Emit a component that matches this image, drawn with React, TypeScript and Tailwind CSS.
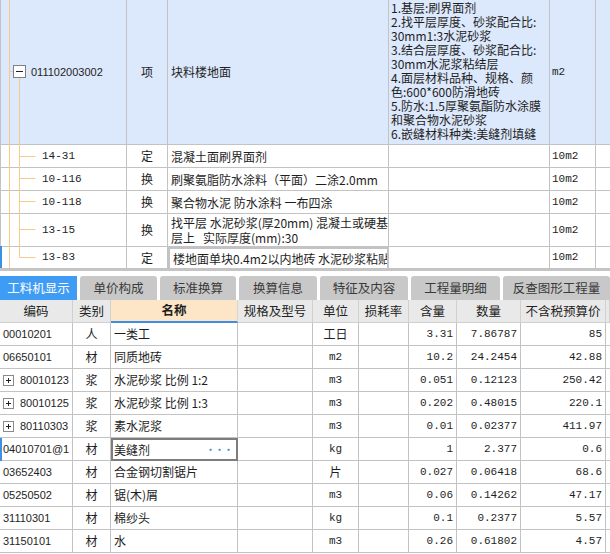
import React from "react";

const line = "border-[#c3c3c3]";

const subRows = [
  { code: "14-31", type: "定", name: ["混凝土面刷界面剂"], unit: "10m2", h: "h-[23px]" },
  { code: "10-116", type: "换", name: ["刷聚氨脂防水涂料（平面）二涂2.0mm"], unit: "10m2", h: "h-[23px]" },
  { code: "10-118", type: "换", name: ["聚合物水泥 防水涂料 一布四涂"], unit: "10m2", h: "h-[23px]" },
  { code: "13-15", type: "换", name: ["找平层 水泥砂浆(厚20mm) 混凝土或硬基", "层上   实际厚度(mm):30"], unit: "10m2", h: "h-[33px]" },
  { code: "13-83", type: "定", name: ["楼地面单块0.4m2以内地砖 水泥砂浆粘贴"], unit: "10m2", h: "h-[22px]", sel: true },
];

const features = [
  "1.基层:刷界面剂",
  "2.找平层厚度、砂浆配合比:",
  "30mm1:3水泥砂浆",
  "3.结合层厚度、砂浆配合比:",
  "30mm水泥浆粘结层",
  "4.面层材料品种、规格、颜",
  "色:600*600防滑地砖",
  "5.防水:1.5厚聚氨酯防水涂膜",
  "和聚合物水泥砂浆",
  "6.嵌缝材料种类:美缝剂填缝",
];

const tabs = [
  { label: "工料机显示", w: "w-[77px]", active: true },
  { label: "单价构成", w: "w-[77px]" },
  { label: "标准换算", w: "w-[76px]" },
  { label: "换算信息", w: "w-[78px]" },
  { label: "特征及内容", w: "w-[88px]" },
  { label: "工程量明细", w: "w-[89px]" },
  { label: "反查图形工程量", w: "w-[107px]" },
];

const heads = ["编码", "类别", "名称", "规格及型号", "单位", "损耗率", "含量", "数量", "不含税预算价", ""];

const items = [
  { code: "00010201", type: "人", name: "一类工", unit: "工日", qty: "3.31", amount: "7.86787", price: "85" },
  { code: "06650101", type: "材", name: "同质地砖", unit: "m2", qty: "10.2", amount: "24.2454", price: "42.88" },
  { code: "80010123", type: "浆", name: "水泥砂浆 比例 1:2", unit: "m3", qty: "0.051", amount: "0.12123", price: "250.42", plus: true },
  { code: "80010125", type: "浆", name: "水泥砂浆 比例 1:3", unit: "m3", qty: "0.202", amount: "0.48015", price: "220.1", plus: true },
  { code: "80110303", type: "浆", name: "素水泥浆", unit: "m3", qty: "0.01", amount: "0.02377", price: "411.97", plus: true },
  { code: "04010701@1", type: "材", name: "美缝剂", unit: "kg", qty: "1", amount: "2.377", price: "0.6", sel: true },
  { code: "03652403", type: "材", name: "合金钢切割锯片", unit: "片", qty: "0.027", amount: "0.06418", price: "68.6" },
  { code: "05250502", type: "材", name: "锯(木)屑", unit: "m3", qty: "0.06", amount: "0.14262", price: "47.17" },
  { code: "31110301", type: "材", name: "棉纱头", unit: "kg", qty: "0.1", amount: "0.2377", price: "5.57" },
  { code: "31150101", type: "材", name: "水", unit: "m3", qty: "0.26", amount: "0.61802", price: "4.57" },
];

const mono = "font-['Liberation_Mono',monospace] text-[11px]";
const sans = "font-['Liberation_Sans',sans-serif] text-[11px]";

function PlusBox() {
  return (
    <svg width="11" height="11" viewBox="0 0 11 11" className="shrink-0">
      <rect x="0.5" y="0.5" width="10" height="10" fill="#fff" stroke="#8a8a8a" />
      <path d="M3 5.5h5M5.5 3v5" stroke="#222" />
    </svg>
  );
}

function TopSection() {
  return (
    <div className="relative">
      <div className="grid grid-cols-[127px_41px_221px_161px_46px_14px]">
        {/* 清单行 */}
        <div className={`h-[145px] bg-[#dce8fb] border-l border-r border-b ${line} flex items-center pl-[30px] ${sans}`}>011102003002</div>
        <div className={`h-[145px] bg-[#dce8fb] border-r border-b ${line} flex items-center justify-center`}>项</div>
        <div className={`h-[145px] bg-[#dce8fb] border-r border-b ${line} flex items-center pl-[3px]`}>块料楼地面</div>
        <div className={`h-[145px] bg-[#dce8fb] border-r border-b ${line} pl-[2px] pt-[1px] whitespace-nowrap overflow-hidden`}>
          {features.map((f, i) => (
            <div key={i} className="leading-[14px]">{f}</div>
          ))}
        </div>
        <div className={`h-[145px] bg-[#dce8fb] border-r border-b ${line} flex items-center pl-[2px] ${mono}`}>m2</div>
        <div className={`h-[145px] bg-[#dce8fb] border-b ${line}`} />

        {subRows.map((r) => (
          <React.Fragment key={r.code}>
            <div className={`${r.h} border-l border-r border-b ${line} flex items-center pl-[41px] ${mono}`}>{r.code}</div>
            <div className={`${r.h} border-r border-b ${line} flex items-center justify-center`}>{r.type}</div>
            <div
              className={`${r.h} border-b ${line} flex flex-col justify-center pl-[3px] whitespace-pre overflow-hidden ${
                r.sel ? "border-2 border-[#3d8fe6] pl-[1px]" : "border-r"
              }`}
            >
              {r.name.map((n, i) => (
                <div key={i} className="leading-[15px]">{n}</div>
              ))}
            </div>
            <div className={`${r.h} border-r border-b ${line}`} />
            <div className={`${r.h} border-r border-b ${line} flex items-center pl-[2px] ${mono}`}>{r.unit}</div>
            <div className={`${r.h} border-b ${line}`} />
          </React.Fragment>
        ))}
      </div>

      {/* 树形连线 */}
      <svg className="absolute left-0 top-0 pointer-events-none" width="40" height="269">
        <path d="M9.5 0v268M9.5 71.5h4M19.5 78v179.5" stroke="#f7c98c" fill="none" />
        {[156.5, 178.5, 201.5, 229.5, 257.5].map((y) => (
          <path key={y} d={`M19.5 ${y}h16`} stroke="#f7c98c" />
        ))}
        <rect x="13.5" y="65.5" width="12" height="12" fill="#fff" stroke="#808080" />
        <path d="M16 71.5h7" stroke="#222" />
        <rect x="0" y="246" width="2" height="22" fill="#3d8fe6" />
      </svg>
    </div>
  );
}

function Tabs() {
  return (
    <div className="flex gap-[3px] h-[24px] mt-[5px]">
      {tabs.map((t) => (
        <div
          key={t.label}
          className={`${t.w} flex items-center justify-center text-[12.5px] ${
            t.active ? "bg-[#3f9cf5] text-white" : "bg-[#c8c8c8] text-[#3a3a3a] rounded-t-[3px]"
          }`}
        >
          {t.label}
        </div>
      ))}
    </div>
  );
}

const cols = "grid grid-cols-[73px_38px_127px_75px_46px_50px_48px_64px_85px_4px]";

function ItemTable() {
  return (
    <div>
      <div className={cols}>
        {heads.map((h, i) =>
          i === 2 ? (
            <div key={i} className="h-[23px] bg-[#fde6c8] border-r border-[#d6d6d6] border-b-2 border-b-[#3d8fe6] flex items-center justify-center font-bold text-[12.5px]">
              {h}
            </div>
          ) : (
            <div key={i} className="h-[23px] bg-[#e9e9e9] border-r border-b border-[#d0d0d0] flex items-center justify-center text-[12.5px] text-[#222]">
              {h}
            </div>
          )
        )}
      </div>
      {items.map((r) => (
        <div key={r.code} className={`${cols} relative`}>
          <div className={`h-[23px] border-r border-b ${line} flex items-center gap-[6px] pl-[3px] ${sans}`}>
            {r.plus && <PlusBox />}
            {r.code}
          </div>
          <div className={`h-[23px] border-r border-b ${line} flex items-center justify-center`}>{r.type}</div>
          {r.sel ? (
            <div className="h-[23px] border-2 border-[#7d7d7d] flex items-center justify-between pl-[1px] pr-[3px]">
              <span>{r.name}</span>
              <span className="text-[#4a8fd6] font-bold text-[9px] leading-none">···</span>
            </div>
          ) : (
            <div className={`h-[23px] border-r border-b ${line} flex items-center pl-[3px] whitespace-nowrap`}>{r.name}</div>
          )}
          <div className={`h-[23px] border-r border-b ${line}`} />
          <div className={`h-[23px] border-r border-b ${line} flex items-center justify-center ${/^[\x00-\x7f]+$/.test(r.unit) ? mono : ""}`}>
            {r.unit}
          </div>
          <div className={`h-[23px] border-r border-b ${line}`} />
          <div className={`h-[23px] border-r border-b ${line} flex items-center justify-end pr-[3px] ${mono}`}>{r.qty}</div>
          <div className={`h-[23px] border-r border-b ${line} flex items-center justify-end pr-[3px] ${mono}`}>{r.amount}</div>
          <div className={`h-[23px] border-r border-b ${line} flex items-center justify-end pr-[3px] ${mono}`}>{r.price}</div>
          <div className={`h-[23px] border-b ${line}`} />
          {r.sel && <div className="absolute left-0 top-0 w-[2px] h-[23px] bg-[#3d8fe6]" />}
        </div>
      ))}
    </div>
  );
}

export default function App() {
  return (
    <div className="w-[610px] h-[554px] overflow-hidden bg-white text-[12px] text-[#1e1e1e] font-['Noto_Sans_CJK_SC',sans-serif]">
      <TopSection />
      <div className="h-[2px] bg-[#c4c4c4]" />
      <Tabs />
      <ItemTable />
    </div>
  );
}
